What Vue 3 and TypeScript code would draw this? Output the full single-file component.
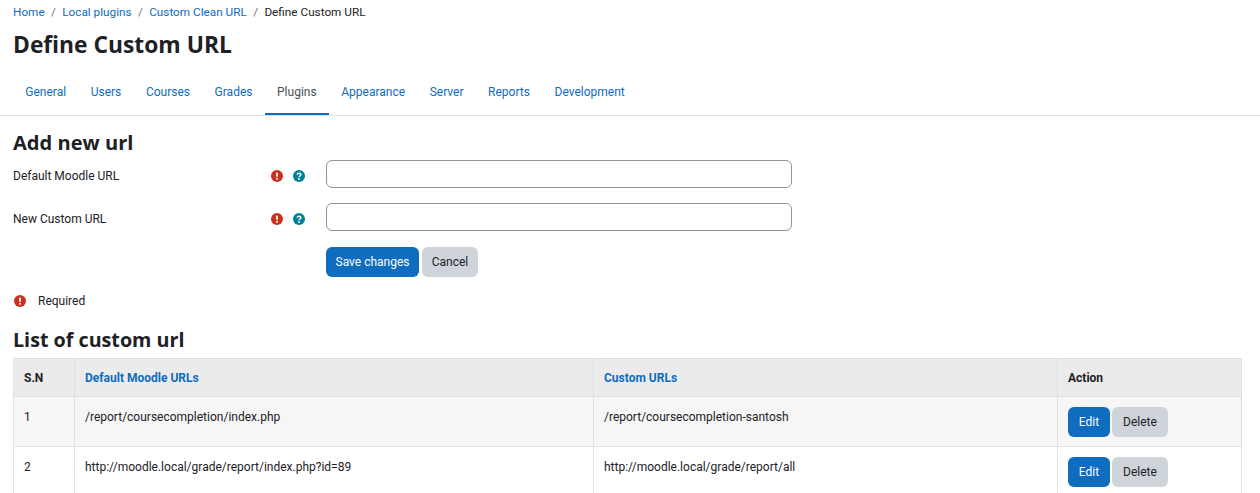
<template>
  <div class="page">
    <nav class="crumbs">
      <a href="#">Home</a><span class="sep">/</span>
      <a href="#">Local plugins</a><span class="sep">/</span>
      <a href="#">Custom Clean URL</a><span class="sep">/</span>
      <span>Define Custom URL</span>
    </nav>
    <h1>Define Custom URL</h1>

    <ul class="tabs">
      <li v-for="t in tabs" :key="t" :class="{ active: t === 'Plugins' }">
        <a href="#">{{ t }}</a>
      </li>
    </ul>

    <section class="content">
      <h2 class="add-title">Add new url</h2>
      <form class="form" @submit.prevent>
        <div v-for="f in fields" :key="f" class="row">
          <label class="label">{{ f }}</label>
          <div class="icons">
            <svg class="icon" viewBox="0 0 12 12">
              <circle cx="6" cy="6" r="6" fill="#ca3120" />
              <rect x="5.1" y="2.4" width="1.8" height="4.4" rx=".6" fill="#fff" />
              <circle cx="6" cy="8.7" r="1" fill="#fff" />
            </svg>
            <svg class="icon" viewBox="0 0 12 12">
              <circle cx="6" cy="6" r="6" fill="#008196" />
              <path d="M4.2 4.7c.1-1 .9-1.5 1.9-1.5s1.8.6 1.8 1.5c0 1.3-1.8 1.3-1.8 2.5" fill="none" stroke="#fff" stroke-width="1.4" />
              <circle cx="6" cy="9" r=".9" fill="#fff" />
            </svg>
          </div>
          <input class="input" type="text" />
        </div>
        <div class="btns">
          <button class="btn primary save" type="submit">Save changes</button>
          <button class="btn secondary delete" type="button">Cancel</button>
        </div>
        <div class="required">
          <svg class="icon" viewBox="0 0 12 12">
            <circle cx="6" cy="6" r="6" fill="#ca3120" />
            <rect x="5.1" y="2.4" width="1.8" height="4.4" rx=".6" fill="#fff" />
            <circle cx="6" cy="8.7" r="1" fill="#fff" />
          </svg>
          <span>Required</span>
        </div>
      </form>

      <h2 class="list-title">List of custom url</h2>
      <table class="urls">
        <colgroup>
          <col class="c-sn" />
          <col class="c-from" />
          <col class="c-to" />
          <col class="c-act" />
        </colgroup>
        <thead>
          <tr>
            <th>S.N</th>
            <th><a href="#">Default Moodle URLs</a></th>
            <th><a href="#">Custom URLs</a></th>
            <th>Action</th>
          </tr>
        </thead>
        <tbody>
          <tr v-for="(r, i) in rows" :key="i">
            <td>{{ i + 1 }}</td>
            <td>{{ r.from }}</td>
            <td>{{ r.to }}</td>
            <td class="actions">
              <button class="btn primary edit" type="button">Edit</button>
              <button class="btn secondary delete" type="button">Delete</button>
            </td>
          </tr>
        </tbody>
      </table>
    </section>
  </div>
</template>

<script setup lang="ts">
const tabs = ['General', 'Users', 'Courses', 'Grades', 'Plugins', 'Appearance', 'Server', 'Reports', 'Development']
const fields = ['Default Moodle URL', 'New Custom URL']
const rows = [
  { from: '/report/coursecompletion/index.php', to: '/report/coursecompletion-santosh' },
  { from: 'http://moodle.local/grade/report/index.php?id=89', to: 'http://moodle.local/grade/report/all' },
]
</script>

<style>
html,
body {
  margin: 0;
  height: 493px;
  overflow: hidden;
  background: #fff;
}
</style>

<style scoped>
.page {
  font-family: Roboto, "Open Sans", sans-serif;
  font-size: 12px;
  color: #1d2125;
}

a {
  color: #0f6cbf;
  text-decoration: none;
}

.crumbs {
  display: flex;
  align-items: center;
  height: 24px;
  padding-left: 13px;
  font-size: 11.75px;
}

.sep {
  padding: 0 6.4px;
  color: #6a737b;
}

h1,
h2 {
  font-family: "Open Sans", sans-serif;
}

h1 {
  margin: 0;
  padding-left: 13px;
  font-size: 22.8px;
  line-height: 42px;
  font-weight: 700;
}

.tabs {
  display: flex;
  list-style: none;
  margin: 2px 0 0;
  padding: 0 0 0 13px;
  height: 47px;
  border-bottom: 1px solid #dee2e6;
}

.tabs li {
  display: flex;
  align-items: center;
  padding: 0 12.3px;
  height: 47px;
  box-sizing: border-box;
}

.tabs li.active {
  border-bottom: 2px solid #0f6cbf;
  padding-top: 2px;
}

.tabs li.active a {
  color: #495057;
}

.content {
  padding: 0 18px 0 13px;
}

h2 {
  margin: 0;
  font-size: 19.7px;
  font-weight: 700;
  line-height: 28px;
}

h2.add-title {
  margin-top: 13px;
  font-size: 20.1px;
}

.row {
  display: flex;
  height: 28px;
  margin-bottom: 15px;
}

.row:first-child {
  margin-top: 3px;
}

.label {
  width: 258px;
  line-height: 32px;
}

.icons {
  display: flex;
  gap: 10px;
  width: 55px;
  padding-top: 10px;
}

.icon {
  width: 12px;
  height: 12px;
  flex: none;
}

.input {
  width: 466px;
  height: 28px;
  box-sizing: border-box;
  border: 1px solid #8f959e;
  border-radius: 6px;
  background: #fff;
}

.btns {
  display: flex;
  gap: 3px;
  margin-left: 313px;
  margin-top: 16px;
}

.btn {
  font-family: inherit;
  font-size: 12px;
  height: 30px;
  padding: 0;
  border: 0;
  border-radius: 6px;
}

.primary {
  background: #0f6cbf;
  color: #fff;
}

.secondary {
  background: #ced4da;
  color: #1d2125;
}

.save {
  width: 93px;
}

.edit {
  width: 42px;
}

.delete {
  width: 56px;
}

.required {
  display: flex;
  align-items: center;
  gap: 12px;
  height: 20px;
  margin-top: 14px;
  padding-left: 1px;
}

.list-title {
  margin-top: 15px;
}

.urls {
  width: 1228px;
  table-layout: fixed;
  border-collapse: collapse;
  margin-top: 4px;
}

.c-sn {
  width: 61px;
}

.c-from {
  width: 519px;
}

.c-to {
  width: 464px;
}

.c-act {
  width: 184px;
}

th,
td {
  border: 1px solid #dee2e6;
  padding: 0 10px;
  text-align: left;
  vertical-align: top;
}

th {
  height: 38px;
  box-sizing: border-box;
  padding-top: 1px;
  vertical-align: middle;
  background: #ebebeb;
  font-weight: 700;
}

td {
  height: 50px;
  box-sizing: border-box;
  padding-top: 13px;
}

tbody tr:nth-child(odd) td {
  background: #f6f6f6;
}

td.actions {
  padding-top: 10px;
}

.actions .btn {
  margin-right: 2px;
}
</style>
